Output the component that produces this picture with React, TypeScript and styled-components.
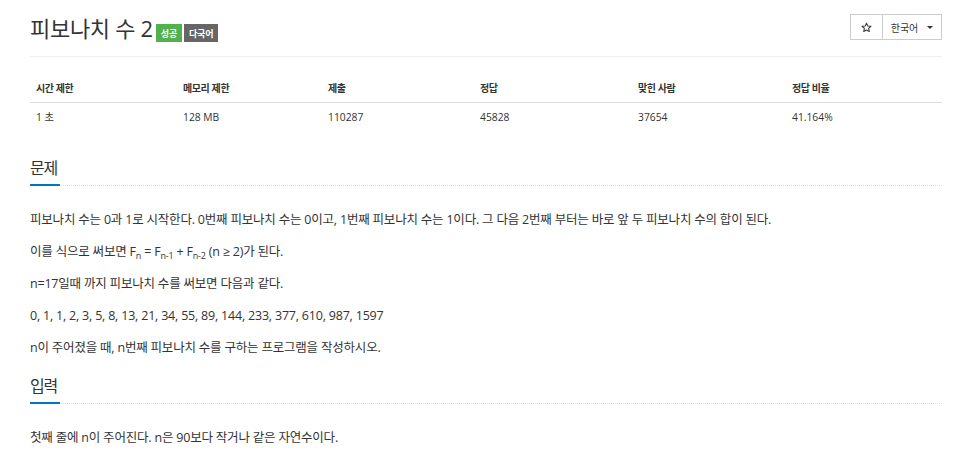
import React from "react";
import styled, { createGlobalStyle } from "styled-components";

const GlobalStyle = createGlobalStyle`
  html, body { margin: 0; padding: 0; background: #fff; }
  body {
    font-family: "Open Sans", "Noto Sans CJK KR", sans-serif;
    color: #333;
  }
`;

const Page = styled.div`
  padding: 0 34px 0 30px;
`;

const Header = styled.header`
  display: flex;
  justify-content: space-between;
  align-items: flex-start;
  padding-top: 14px;
  height: 42px;
  border-bottom: 1px solid #eee;
`;

const TitleRow = styled.div`
  display: flex;
  align-items: flex-start;
  gap: 2px;
`;

const Title = styled.h1`
  margin: 0 1px 0 0;
  font-size: 22px;
  line-height: 28px;
  font-weight: 400;
  letter-spacing: -0.3px;
  color: #333;
`;

const Badge = styled.span<{ $bg: string }>`
  margin-top: 10px;
  height: 18px;
  padding: 0 5px;
  display: inline-flex;
  align-items: center;
  background: ${(p) => p.$bg};
  color: #fff;
  font-size: 9px;
  font-weight: 700;
  letter-spacing: -0.2px;
`;

const BtnGroup = styled.div`
  display: flex;
  height: 26px;
  box-sizing: border-box;
  border: 1px solid #ccc;
`;

const Btn = styled.div<{ $w: number }>`
  width: ${(p) => p.$w}px;
  display: flex;
  align-items: center;
  justify-content: center;
  gap: 9px;
  font-size: 10px;
  color: #333;
  & + & { border-left: 1px solid #ccc; }
`;

const Caret = styled.span`
  width: 0;
  height: 0;
  border-left: 3px solid transparent;
  border-right: 3px solid transparent;
  border-top: 3px solid #333;
`;

const Table = styled.table`
  width: 100%;
  border-collapse: collapse;
  table-layout: fixed;
  margin-top: 16px;
`;

const Th = styled.th<{ $w: number }>`
  box-sizing: border-box;
  width: ${(p) => p.$w}px;
  text-align: left;
  font-size: 10px;
  font-weight: 700;
  letter-spacing: -0.4px;
  padding: 8px 6px 7px;
  line-height: 14px;
  border-bottom: 1px solid #ddd;
`;

const Td = styled.td`
  font-size: 10.3px;
  padding: 7px 6px;
  line-height: 14px;
  color: #333;
`;

const Section = styled.section<{ $top: number }>`
  margin-top: ${(p) => p.$top}px;
`;

const SectionTitle = styled.div`
  display: flex;
  align-items: flex-end;
  border-bottom: 1px dotted #ddd;
`;

const SectionText = styled.h2`
  margin: 0;
  font-size: 16px;
  font-weight: 400;
  line-height: 22px;
  letter-spacing: -1.2px;
  padding-bottom: 5px;
  margin-bottom: -1px;
  border-bottom: 2px solid #0076c0;
  width: 30px;
  color: #333;
`;

const Body = styled.div`
  padding-top: 23px;
  font-size: 12.5px;
  letter-spacing: -0.2px;
  line-height: 21.7px;
`;

const P = styled.p`
  margin: 0 0 10px;
`;

const Sub = styled.span`
  font-size: 9px;
  position: relative;
  top: 3px;
`;

const cols = [
  ["시간 제한", "1 초", 147],
  ["메모리 제한", "128 MB", 145],
  ["제출", "110287", 152],
  ["정답", "45828", 158],
  ["맞힌 사람", "37654", 154],
  ["정답 비율", "41.164%", 156],
] as const;

export default function App() {
  return (
    <Page>
      <GlobalStyle />
      <Header>
        <TitleRow>
          <Title>피보나치 수 2</Title>
          <Badge $bg="#53b04f">성공</Badge>
          <Badge $bg="#666">다국어</Badge>
        </TitleRow>
        <BtnGroup>
          <Btn $w={31}>
            <svg width="11" height="11" viewBox="0 0 24 24" fill="none" stroke="#333" strokeWidth="2.2" strokeLinejoin="round">
              <path d="M12 2.5l2.9 6.3 6.8.7-5.1 4.6 1.5 6.8L12 17.4l-6.1 3.5 1.5-6.8-5.1-4.6 6.8-.7z" />
            </svg>
          </Btn>
          <Btn $w={58}>
            <span>한국어</span>
            <Caret />
          </Btn>
        </BtnGroup>
      </Header>
      <Table>
        <thead>
          <tr>
            {cols.map(([h, , w]) => (
              <Th key={h} $w={w}>{h}</Th>
            ))}
          </tr>
        </thead>
        <tbody>
          <tr>
            {cols.map(([h, v]) => (
              <Td key={h}>{v}</Td>
            ))}
          </tr>
        </tbody>
      </Table>
      <Section $top={26}>
        <SectionTitle>
          <SectionText>문제</SectionText>
        </SectionTitle>
        <Body>
          <P>피보나치 수는 0과 1로 시작한다. 0번째 피보나치 수는 0이고, 1번째 피보나치 수는 1이다. 그 다음 2번째 부터는 바로 앞 두 피보나치 수의 합이 된다.</P>
          <P>이를 식으로 써보면 F<Sub>n</Sub> = F<Sub>n-1</Sub> + F<Sub>n-2</Sub> (n ≥ 2)가 된다.</P>
          <P>n=17일때 까지 피보나치 수를 써보면 다음과 같다.</P>
          <P>0, 1, 1, 2, 3, 5, 8, 13, 21, 34, 55, 89, 144, 233, 377, 610, 987, 1597</P>
          <P>n이 주어졌을 때, n번째 피보나치 수를 구하는 프로그램을 작성하시오.</P>
        </Body>
      </Section>
      <Section $top={16}>
        <SectionTitle>
          <SectionText>입력</SectionText>
        </SectionTitle>
        <Body>
          <P>첫째 줄에 n이 주어진다. n은 90보다 작거나 같은 자연수이다.</P>
        </Body>
      </Section>
    </Page>
  );
}
